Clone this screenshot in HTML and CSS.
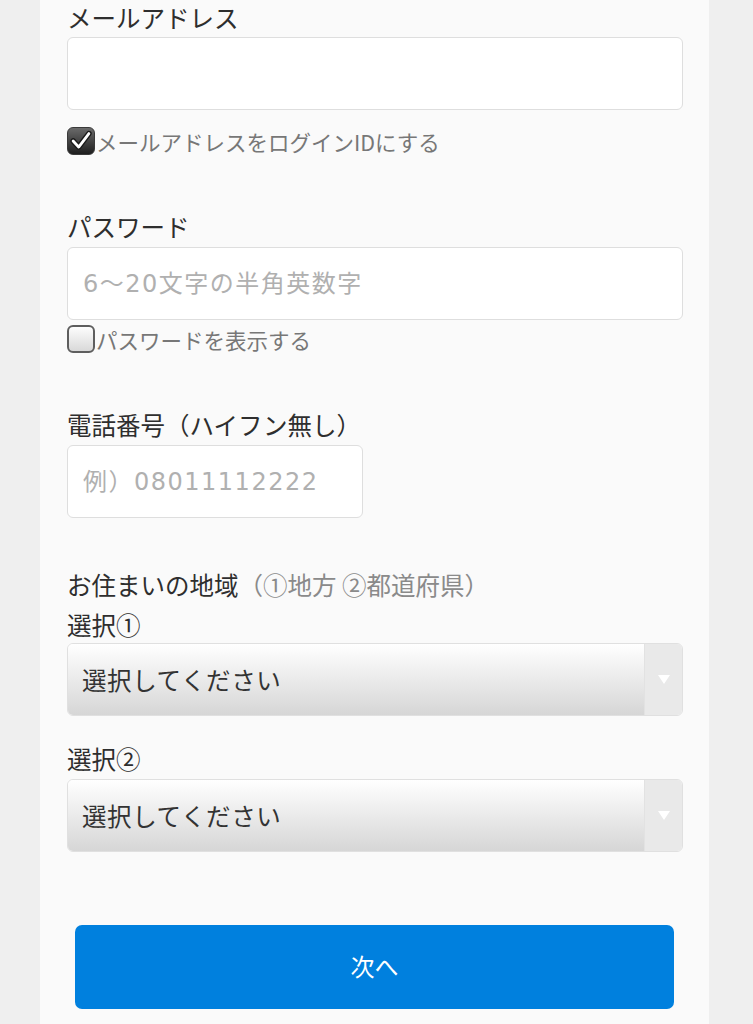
FILE: index.html
```html
<!DOCTYPE html>
<html lang="ja">
<head>
<meta charset="utf-8">
<link rel="stylesheet" href="styles.css">
</head>
<body>
<div class="page">
  <form class="form">
    <div class="label">メールアドレス</div>
    <input class="field" type="text">
    <label class="check">
      <span class="box box-on">
        <svg viewBox="0 0 28 28" width="28" height="28"><path d="M5.5 14 L11.5 20.5 L22.5 6" fill="none" stroke="#1a1a1a" stroke-width="6" stroke-linecap="round" stroke-linejoin="round"/><path d="M5.5 14 L11.5 20.5 L22.5 6" fill="none" stroke="#fff" stroke-width="3" stroke-linecap="round" stroke-linejoin="round"/></svg>
      </span>
      <span class="check-text">メールアドレスをログインIDにする</span>
    </label>

    <div class="label gap">パスワード</div>
    <input class="field" type="text" placeholder="6〜20文字の半角英数字">
    <label class="check check-tight">
      <span class="box box-off"></span>
      <span class="check-text">パスワードを表示する</span>
    </label>

    <div class="label gap">電話番号（ハイフン無し）</div>
    <input class="field field-short" type="text" placeholder="例）08011112222">

    <div class="label gap-region">お住まいの地域<span class="sub">（①地方 ②都道府県）</span></div>
    <div class="label label-select">選択①</div>
    <div class="select">
      <span class="select-text">選択してください</span>
      <span class="select-arrow"><svg viewBox="0 0 12 9" width="12" height="9"><path d="M0 0 H12 L6 9 Z" fill="#fff"/></svg></span>
    </div>

    <div class="label label-select2">選択②</div>
    <div class="select">
      <span class="select-text">選択してください</span>
      <span class="select-arrow"><svg viewBox="0 0 12 9" width="12" height="9"><path d="M0 0 H12 L6 9 Z" fill="#fff"/></svg></span>
    </div>

    <button class="next" type="button">次へ</button>
  </form>
</div>
</body>
</html>
```

FILE: styles.css
```css
html, body {
  margin: 0;
  padding: 0;
  background: #efefef;
}
body {
  font-family: "Noto Sans CJK JP", "Noto Sans", sans-serif;
  color: #333;
}
.page {
  width: 669px;
  margin-left: 40px;
  background: #fafafa;
  min-height: 1024px;
  box-sizing: border-box;
  padding: 0 26px 0 27px;
}
.form {
  display: flex;
  flex-direction: column;
}
.label {
  font-size: 24.5px;
  line-height: 36px;
  height: 36px;
  color: #2e2e2e;
  margin-bottom: 1px;
  white-space: nowrap;
}
.gap { margin-top: 54px; margin-bottom: 2px; }
.gap-region { margin-top: 49px; margin-bottom: 4px; }
.label-select { margin-bottom: 0; }
.label-select2 { margin-top: 25px; margin-bottom: 2px; }
.sub { color: #8a8a8a; }
.field {
  display: block;
  box-sizing: border-box;
  width: 616px;
  height: 73px;
  margin: 0;
  border: 1.5px solid #dedede;
  border-radius: 6px;
  background: #fff;
  padding: 0 15px;
  font-family: "DejaVu Sans", "Noto Sans CJK JP", sans-serif;
  font-size: 24px;
  letter-spacing: 1.5px;
  color: #333;
  outline: none;
}
.field::placeholder {
  color: #b0b0b0;
  font-family: "DejaVu Sans", "Noto Sans CJK JP", sans-serif;
}
.field-short { width: 296px; }
.check {
  display: flex;
  align-items: center;
  height: 28px;
  margin-top: 17px;
}
.check-tight { margin-top: 5px; }
.box {
  width: 28px;
  height: 28px;
  box-sizing: border-box;
  border-radius: 6px;
  flex: none;
  display: flex;
  align-items: center;
  justify-content: center;
}
.box-on {
  background: linear-gradient(#6a6a6a, #1e1e1e);
  border: 1.5px solid #3a3a3a;
}
.box-on svg { display: block; }
.box-off {
  background: linear-gradient(#fdfdfd, #d9d9d9);
  border: 2px solid #5e5e5e;
}
.check-text {
  font-size: 21.5px;
  color: #777;
  margin-left: 1px;
  white-space: nowrap;
}
.select {
  display: flex;
  box-sizing: border-box;
  width: 616px;
  height: 73px;
  border: 1.5px solid #e0e0e0;
  border-radius: 6px;
  overflow: hidden;
}
.select-text {
  flex: 1;
  display: flex;
  align-items: center;
  padding-left: 14px;
  font-size: 24.5px;
  letter-spacing: 0.6px;
  color: #333;
  background: linear-gradient(#ffffff, #d6d6d6);
}
.select-arrow {
  width: 37px;
  flex: none;
  display: flex;
  align-items: center;
  justify-content: center;
  background: #e9e9e9;
  border-left: 1px solid #e2e2e2;
}
.select-arrow svg { display: block; }
.next {
  margin: 73px 9px 0 8px;
  height: 84px;
  padding-bottom: 5px;
  border: none;
  border-radius: 7px;
  background: #0080de;
  color: #fff;
  font-family: "Noto Sans CJK JP", sans-serif;
  font-size: 24px;
  cursor: pointer;
}
```
